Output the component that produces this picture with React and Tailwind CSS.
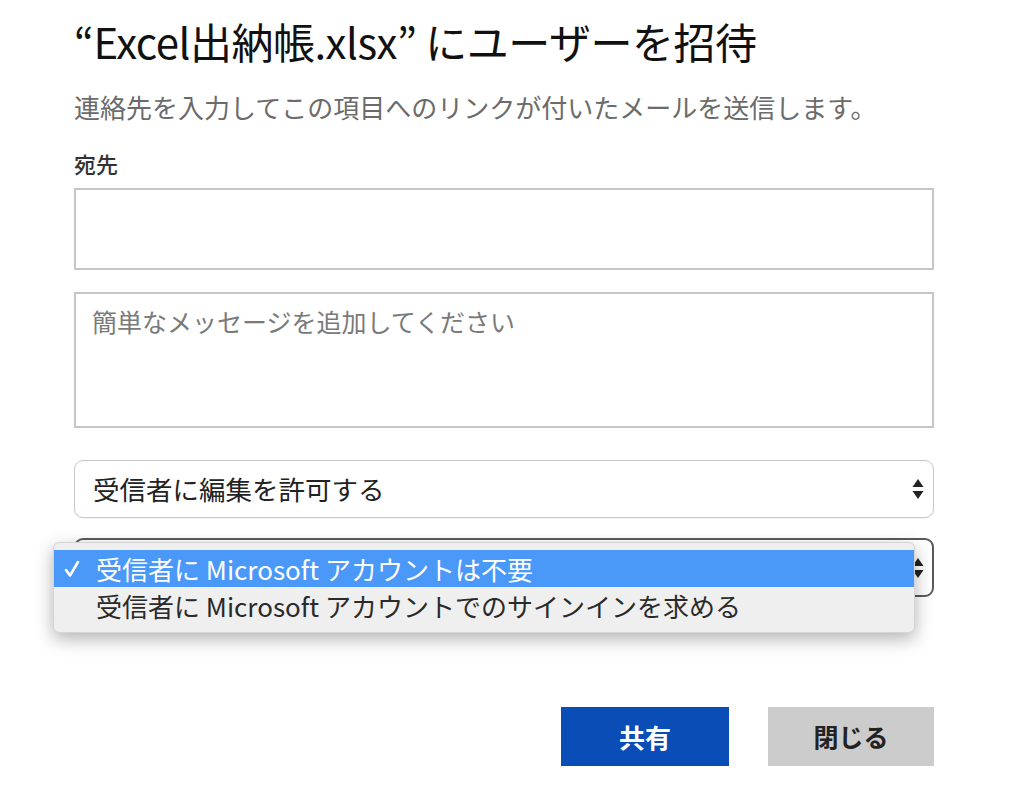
import React from "react";

const font = { fontFamily: '"Noto Sans CJK JP", "Noto Sans", sans-serif' };

function Arrows({ className = "" }) {
  return (
    <svg width="12" height="22" viewBox="0 0 12 22" className={className}>
      <path d="M6 1 L11.5 9 L0.5 9 Z" fill="#222" />
      <path d="M0.5 13 L11.5 13 L6 21 Z" fill="#222" />
    </svg>
  );
}

export default function App() {
  return (
    <div className="relative w-[1024px] h-[806px] bg-white overflow-hidden" style={font}>
      <div className="flex flex-col pl-[74px] pr-[90px] pt-[16px]">
        <h1 className="text-[42px] leading-[50px] font-normal text-[#111] tracking-[-0.5px] whitespace-nowrap">
          “Excel出納帳.xlsx” にユーザーを招待
        </h1>
        <p className="mt-[25px] text-[26px] leading-[32px] text-[#6b6b6b] whitespace-nowrap">
          連絡先を入力してこの項目へのリンクが付いたメールを送信します。
        </p>
        <label className="mt-[26px] text-[22px] leading-[28px] text-[#333] font-medium">宛先</label>
        <div className="mt-[11px] h-[82px] border-2 border-[#c6c6c6] bg-white"></div>
        <div className="mt-[22px] h-[136px] border-2 border-[#c6c6c6] bg-white px-[16px] pt-[10px]">
          <span className="text-[25px] leading-[34px] text-[#7a7a7a]">簡単なメッセージを追加してください</span>
        </div>
        <div className="mt-[32px] h-[58px] rounded-[9px] border border-[#c8c8c8] bg-white flex items-center justify-between pl-[18px] pr-[9px] shadow-[0_1px_1px_rgba(0,0,0,0.05)]">
          <span className="text-[26.5px] leading-[32px] text-[#222]">受信者に編集を許可する</span>
          <Arrows />
        </div>
        <div className="mt-[20px] h-[59px] rounded-[9px] border-2 border-[#5a5a5a] bg-white flex items-center justify-end pr-[8px]">
          <Arrows />
        </div>
        <div className="mt-[110px] flex justify-end gap-[39px]">
          <button className="w-[168px] h-[59px] bg-[#0b4db6] text-white text-[26px] font-bold">共有</button>
          <button className="w-[166px] h-[59px] bg-[#cccccc] text-[#222] text-[25px] font-bold">閉じる</button>
        </div>
      </div>

      <div className="absolute left-[53px] top-[542px] w-[862px] h-[91px] rounded-[6px] bg-[#efefef] border border-[#d4d4d4] shadow-[0_6px_18px_rgba(0,0,0,0.3)] py-[7px] flex flex-col">
        <div className="h-[37px] bg-[#4a98f7] flex items-center text-white">
          <span className="w-[42px] pl-[10px] flex items-center">
            <svg width="16" height="18" viewBox="0 0 16 18">
              <path d="M2 10 L6 15.5 L14 2" fill="none" stroke="white" strokeWidth="2.6" strokeLinecap="round" strokeLinejoin="round" />
            </svg>
          </span>
          <span className="text-[26px] leading-[32px]">受信者に Microsoft アカウントは不要</span>
        </div>
        <div className="h-[38px] flex items-center text-[#2a2a2a]">
          <span className="w-[42px]"></span>
          <span className="text-[26px] leading-[32px]">受信者に Microsoft アカウントでのサインインを求める</span>
        </div>
      </div>
    </div>
  );
}
